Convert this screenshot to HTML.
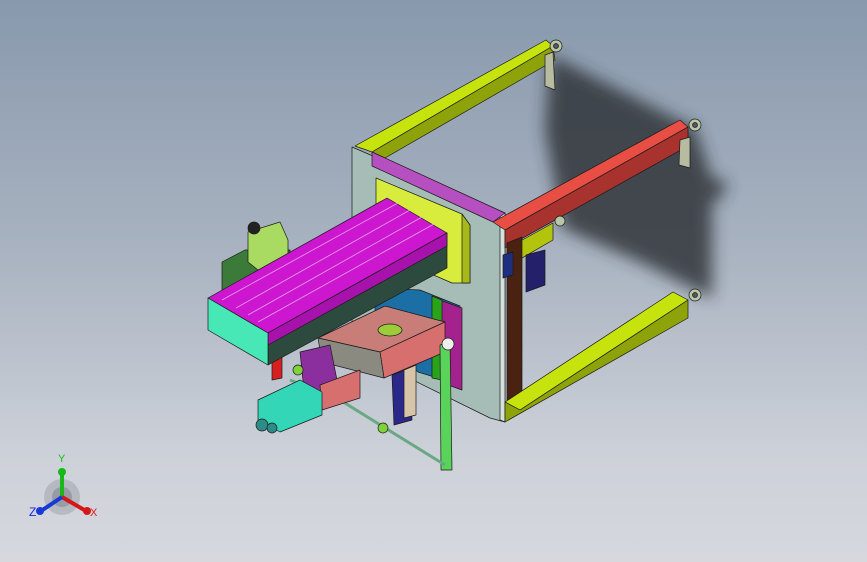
<!DOCTYPE html>
<html><head><meta charset="utf-8"><style>
html,body{margin:0;padding:0;width:867px;height:562px;overflow:hidden}
body{background:linear-gradient(180deg,#8899ad 0%,#a9b3c1 45%,#ccd0d8 80%,#d6d8de 100%)}
svg{position:absolute;left:0;top:0}
text{font-family:"Liberation Sans",sans-serif}
</style></head><body>
<svg width="867" height="562" viewBox="0 0 867 562">
<defs><filter id="b" x="-20%" y="-20%" width="140%" height="140%"><feGaussianBlur stdDeviation="8"/></filter></defs>
<!-- shadow -->
<polygon points="550,55 695,128 712,178 728,182 720,200 712,200 712,298 640,262 562,228 545,130" fill="#2a2d33" opacity="0.8" filter="url(#b)"/>
<g stroke="#1a1a1a" stroke-width="0.7" stroke-linejoin="round">
<!-- top yellow bar -->
<polygon points="355,146 546,40 553,46 372,152" fill="#c6e30e"/>
<polygon points="372,152 553,46 555,60 385,158" fill="#8ea20a"/>
<polygon points="545,55 553,52 555,90 545,86" fill="#b7bba0"/>
<circle cx="556" cy="46" r="6" fill="#b9c6a6"/><circle cx="556" cy="46" r="2.5" fill="#556"/>
<!-- plate -->
<polygon points="352,147 505,213 505,422 490,418 352,350" fill="#a6bdb7"/>
<polygon points="500,213 505,213 505,422 500,420" fill="#d6e0dc"/>
<!-- purple bar -->
<polygon points="372,152 505,213 493,222 372,166" fill="#b64fc0"/>
<!-- red bar -->
<polygon points="493,222 680,120 688,127 505,230" fill="#e84e44"/>
<polygon points="505,230 688,127 688,146 505,248" fill="#a8322e"/>
<polygon points="680,140 690,137 690,168 679,165" fill="#b7bba0"/>
<circle cx="695" cy="125" r="6" fill="#b9c6a6"/><circle cx="695" cy="125" r="2.5" fill="#556"/>
<circle cx="560" cy="221" r="5" fill="#b9c6a6"/>
<!-- yellow stub under red -->
<polygon points="515,244 553,223 553,240 515,262" fill="#b2c50c"/>
<!-- brown vertical bar -->
<polygon points="507,243 522,237 522,398 507,405" fill="#4a2212"/>
<polygon points="503,255 513,252 513,275 503,278" fill="#1f2f80"/>
<polygon points="526,255 545,250 545,285 526,292" fill="#25206a"/>
<!-- bottom yellow bar -->
<polygon points="505,402 673,292 688,300 520,410" fill="#c6e30e"/>
<polygon points="520,410 688,300 688,318 505,422 505,402" fill="#8ea20a"/>
<circle cx="695" cy="295" r="6" fill="#b9c6a6"/><circle cx="695" cy="295" r="2.5" fill="#556"/>
<!-- yellow carriage -->
<polygon points="376,178 462,214 470,225 470,283 452,283 376,250" fill="#d7ec3c"/>
<polygon points="462,214 470,225 470,283 462,283" fill="#a7b81a"/>
<!-- blue perforated panel + purple -->
<polygon points="375,288 420,290 460,306 460,385 418,372 375,330" fill="#1c6fa5"/>
<polygon points="440,300 462,308 462,390 448,385" fill="#a3228d"/>
<polygon points="432,296 442,300 442,380 432,378" fill="#2aa31b"/>
<!-- pink plate -->
<polygon points="318,338 385,306 445,322 380,352" fill="#c87d78"/>
<polygon points="380,352 445,322 445,352 384,378" fill="#d86f6f"/>
<polygon points="318,338 380,352 384,378 322,362" fill="#8a8a80"/>
<ellipse cx="390" cy="330" rx="12" ry="6" fill="#9ccc3a"/>
<!-- verticals below -->
<polygon points="392,375 410,368 412,420 394,425" fill="#2a2888"/>
<polygon points="404,370 416,365 416,415 404,418" fill="#d8c4a8"/>
<polygon points="440,345 450,342 452,470 441,470" fill="#5ad35a"/>
<circle cx="448" cy="344" r="6" fill="#eee"/>
<!-- rods -->
<line x1="340" y1="400" x2="445" y2="465" stroke="#6aa884" stroke-width="3"/>
<line x1="290" y1="380" x2="340" y2="400" stroke="#6aa884" stroke-width="3"/>
<!-- cylinders lower-left -->
<polygon points="300,352 330,345 340,395 305,400" fill="#8b2f9e"/>
<polygon points="320,385 360,370 360,398 322,410" fill="#d86f6f"/>
<polygon points="258,400 300,380 322,392 322,415 280,432 258,420" fill="#34d6b8"/>
<circle cx="262" cy="425" r="6" fill="#2d8c87"/><circle cx="272" cy="428" r="5" fill="#2d8c87"/>
<circle cx="383" cy="428" r="5" fill="#7fd23a"/><circle cx="298" cy="370" r="5" fill="#7fd23a"/>
<polygon points="272,360 282,357 282,378 272,380" fill="#d62020"/>
<!-- motor -->
<polygon points="222,262 245,250 290,250 290,300 222,300" fill="#3c7a3a"/>
<polygon points="248,232 280,222 288,240 288,262 258,270 248,262" fill="#a9db62"/>
<circle cx="254" cy="228" r="6" fill="#222"/>
<!-- magenta module -->
<polygon points="208,298 387,198 447,233 268,333" fill="#cc16cf"/>
<polygon points="268,333 447,233 447,268 268,365" fill="#2d4a3e"/>
<polygon points="268,333 447,233 447,246 268,345" fill="#a812ac"/>
<polygon points="208,298 268,333 268,365 208,330" fill="#48e8b6"/>
<g stroke="#e7a0ea" stroke-width="0.8" fill="none">
<line x1="222" y1="300" x2="398" y2="203"/><line x1="236" y1="308" x2="410" y2="210"/>
<line x1="248" y1="315" x2="422" y2="217"/><line x1="258" y1="322" x2="434" y2="224"/>
</g>
</g>
<!-- triad -->
<circle cx="62" cy="497" r="18" fill="#9a9fa8" opacity="0.5"/>
<circle cx="62" cy="497" r="10" fill="#7a7f88" opacity="0.5"/>
<line x1="62" y1="497" x2="62" y2="474" stroke="#18b818" stroke-width="4"/>
<circle cx="62" cy="472" r="4" fill="#18b818"/>
<line x1="62" y1="497" x2="86" y2="511" stroke="#d41818" stroke-width="4"/>
<circle cx="87" cy="511" r="4" fill="#d41818"/>
<line x1="62" y1="497" x2="41" y2="511" stroke="#1838d8" stroke-width="4"/>
<circle cx="40" cy="511" r="4" fill="#1838d8"/>
<text x="58" y="462" font-size="11" fill="#18c018">Y</text>
<text x="90" y="516" font-size="11" fill="#e01818">X</text>
<text x="29" y="516" font-size="12" fill="#1828e0">Z</text>
</svg>
</body></html>
